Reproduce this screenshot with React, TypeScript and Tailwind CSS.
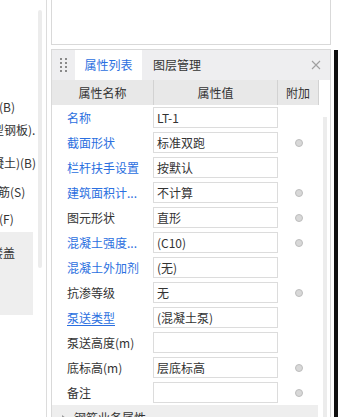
const rows = [
  { name: "名称", value: "LT-1", blue: true, dot: false },
  { name: "截面形状", value: "标准双跑", blue: true, dot: true },
  { name: "栏杆扶手设置", value: "按默认", blue: true, dot: false },
  { name: "建筑面积计...", value: "不计算", blue: true, dot: true },
  { name: "图元形状", value: "直形", blue: false, dot: true },
  { name: "混凝土强度...", value: "(C10)", blue: true, dot: true },
  { name: "混凝土外加剂", value: "(无)", blue: true, dot: false },
  { name: "抗渗等级", value: "无", blue: false, dot: true },
  { name: "泵送类型", value: "(混凝土泵)", blue: true, dot: false, underline: true },
  { name: "泵送高度(m)", value: "", blue: false, dot: false },
  { name: "底标高(m)", value: "层底标高", blue: false, dot: true },
  { name: "备注", value: "", blue: false, dot: true },
];

function LeftTree() {
  return (
    <div className="relative w-[47px] shrink-0 overflow-hidden border-r border-[#dcdcdc] text-[12px] leading-[20px] text-[#333]">
      <div className="absolute left-[38px] top-[10px] h-[258px] w-[4px] rounded-full bg-[#ececec]" />
      <div className="flex w-[37px] flex-col overflow-hidden whitespace-nowrap">
        <div className="mt-[97px] ml-[-1px]">(B)</div>
        <div className="mt-[3px] ml-[-8px]">型钢板).</div>
        <div className="mt-[13px] ml-[-8px]">凝土)(B)</div>
        <div className="mt-[9px] ml-[-2px]">筋(S)</div>
        <div className="mt-[7px] ml-[-1px]">(F)</div>
        <div className="mt-[3px] h-[83px] w-[33px] bg-[#eeeeee] pt-[11px]">
          <div className="ml-[-9px]">楼盖</div>
        </div>
        <div className="mt-[35px] ml-[-4px]">)</div>
        <div className="mt-[7px] ml-[-4px]">)</div>
      </div>
    </div>
  );
}

function Handle() {
  return (
    <div className="grid w-[23px] grid-cols-[2px_2px] content-center justify-center gap-x-[3px] gap-y-[2px]">
      {Array.from({ length: 8 }).map((_, i) => (
        <span key={i} className="h-[2px] w-[2px] bg-[#8a8a8a]" />
      ))}
    </div>
  );
}

export default function App() {
  return (
    <div
      className="flex h-[417px] w-[338px] overflow-hidden bg-white"
      style={{ fontFamily: '"Noto Sans CJK SC", "Noto Sans", sans-serif' }}
    >
      <LeftTree />

      <div className="ml-[4px] flex w-[280px] shrink-0 flex-col">
        <div className="h-[45px] shrink-0 border-x border-b border-[#d9d9d9] bg-white" />

        <div className="mt-[4px] flex flex-1 flex-col border-x border-t border-[#d9d9d9]">
          <div className="flex h-[30px] shrink-0 items-stretch bg-[#eeeef0] text-[12px]">
            <Handle />
            <div className="flex w-[67px] items-center justify-center bg-white text-[#2b6fe0]">属性列表</div>
            <div className="flex items-center pl-[11px] text-[#333]">图层管理</div>
            <div className="ml-auto flex items-center pr-[9px]">
              <svg width="10" height="10" viewBox="0 0 10 10">
                <path d="M1 1L9 9M9 1L1 9" stroke="#a0a0a0" strokeWidth="1.1" />
              </svg>
            </div>
          </div>

          <div className="flex flex-1">
            <div className="flex w-[267px] flex-col text-[12px]">
              <div className="flex h-[25px] shrink-0 bg-[#e8e8e8] text-[#333]">
                <div className="flex w-[102px] items-center justify-center border-r border-[#d2d2d2]">属性名称</div>
                <div className="flex w-[124px] items-center justify-center border-r border-[#d2d2d2]">属性值</div>
                <div className="flex w-[41px] items-center justify-center border-r border-[#d2d2d2]">附加</div>
              </div>

              {rows.map((r) => (
                <div key={r.name} className="flex h-[25px] shrink-0">
                  <div
                    className={`flex w-[101px] items-center whitespace-nowrap pl-[15px] ${
                      r.blue ? "text-[#2b6fe0]" : "text-[#333]"
                    }`}
                  >
                    <span className={r.underline ? "underline underline-offset-2" : ""}>{r.name}</span>
                  </div>
                  <div className="w-[126px] pt-[2px]">
                    <div className="flex h-[21px] w-[125px] items-center border border-[#dcdcdc] pl-[3px] text-[#333]">
                      {r.value}
                    </div>
                  </div>
                  <div className="flex w-[40px] items-center justify-center">
                    {r.dot && <span className="h-[8px] w-[8px] rounded-full border border-[#bdbdbd] bg-[#d8d8d8]" />}
                  </div>
                </div>
              ))}

              <div className="flex h-[25px] w-[266px] shrink-0 items-center bg-[#eeeeee] pl-[10px] text-[#333]">
                <svg width="4" height="6" viewBox="0 0 4 6">
                  <path d="M0 0L4 3L0 6Z" fill="#9a9a9a" />
                </svg>
                <span className="ml-[8px]">钢筋业务属性</span>
              </div>
            </div>

            <div className="flex-1 pl-[4px] pt-[37px]">
              <div className="h-full w-[4px] bg-[#ececec]" />
            </div>
          </div>
        </div>
      </div>

      <div className="flex w-[7px] shrink-0">
        <div className="w-[3px]" />
        <div className="mt-[50px] w-[4px] bg-[#111]" />
      </div>
    </div>
  );
}
